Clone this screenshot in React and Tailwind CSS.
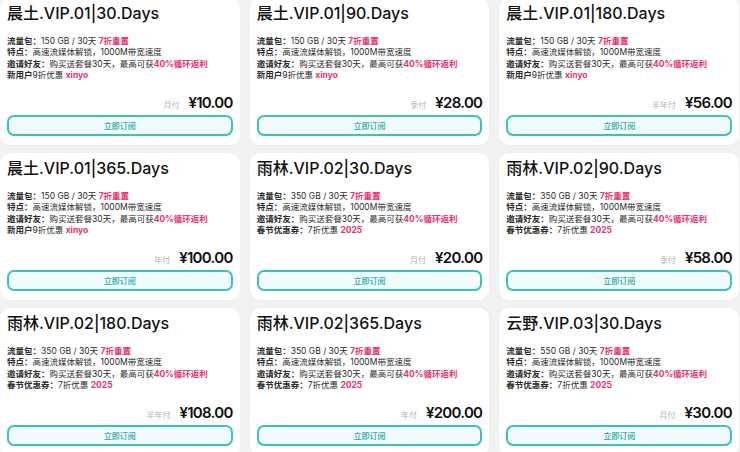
const plans = [
  { name: "晨土", vip: "01", days: "30", gb: "150", period: "月付", price: "¥10.00", promo: "new" },
  { name: "晨土", vip: "01", days: "90", gb: "150", period: "季付", price: "¥28.00", promo: "new" },
  { name: "晨土", vip: "01", days: "180", gb: "150", period: "半年付", price: "¥56.00", promo: "new" },
  { name: "晨土", vip: "01", days: "365", gb: "150", period: "年付", price: "¥100.00", promo: "new" },
  { name: "雨林", vip: "02", days: "30", gb: "350", period: "月付", price: "¥20.00", promo: "spring" },
  { name: "雨林", vip: "02", days: "90", gb: "350", period: "季付", price: "¥58.00", promo: "spring" },
  { name: "雨林", vip: "02", days: "180", gb: "350", period: "半年付", price: "¥108.00", promo: "spring" },
  { name: "雨林", vip: "02", days: "365", gb: "350", period: "年付", price: "¥200.00", promo: "spring" },
  { name: "云野", vip: "03", days: "30", gb: "550", period: "月付", price: "¥30.00", promo: "spring" },
];

function PlanCard({ plan }) {
  return (
    <div className="bg-white rounded-[10px] px-[7px] pt-[5px] pb-[9px] h-[147px] flex flex-col shadow-[0_0_3px_rgba(0,0,0,0.04)]">
      <div className="text-[16px] leading-[21px] font-medium text-[#111]">
        {plan.name}.VIP.{plan.vip}|{plan.days}.Days
      </div>
      <div className="mt-[12px] text-[8.5px] leading-[11.3px] text-[#2b2b2b]">
        <div>
          <span className="font-bold">流量包：</span>
          {plan.gb} GB / 30天 <span className="font-bold text-[#e8336e]">7折重置</span>
        </div>
        <div>
          <span className="font-bold">特点：</span>高速流媒体解锁，1000M带宽速度
        </div>
        <div>
          <span className="font-bold">邀请好友：</span>购买送套餐30天，最高可获
          <span className="font-bold text-[#e8336e]">40%循环返利</span>
        </div>
        {plan.promo === "new" ? (
          <div>
            <span className="font-bold">新用户</span>9折优惠{" "}
            <span className="font-bold text-[#e8336e]">xinyo</span>
          </div>
        ) : (
          <div>
            <span className="font-bold">春节优惠券：</span>7折优惠{" "}
            <span className="font-bold text-[#e8336e]">2025</span>
          </div>
        )}
      </div>
      <div className="mt-auto flex items-baseline justify-end gap-[9px]">
        <span className="text-[8px] text-[#b3b3b3]">{plan.period}</span>
        <span className="text-[15px] leading-[20px] font-semibold text-[#111] tracking-[-0.7px]">{plan.price}</span>
      </div>
      <button className="mt-[2px] h-[21px] w-full rounded-[7px] border-2 border-[#3cc1bf] bg-[#f1fbfb] text-[8px] text-[#22a8a6] font-medium">
        立即订阅
      </button>
    </div>
  );
}

export default function App() {
  return (
    <div
      className="w-[740px] h-[452px] overflow-hidden bg-[#f2f2f2]"
      style={{ fontFamily: '"Inter", "Noto Sans CJK SC", sans-serif' }}
    >
      <div className="mt-[-2px] w-[739px] grid grid-cols-3 gap-x-[10px] gap-y-[8px]">
        {plans.map((plan) => (
          <PlanCard key={plan.name + plan.days} plan={plan} />
        ))}
      </div>
    </div>
  );
}
